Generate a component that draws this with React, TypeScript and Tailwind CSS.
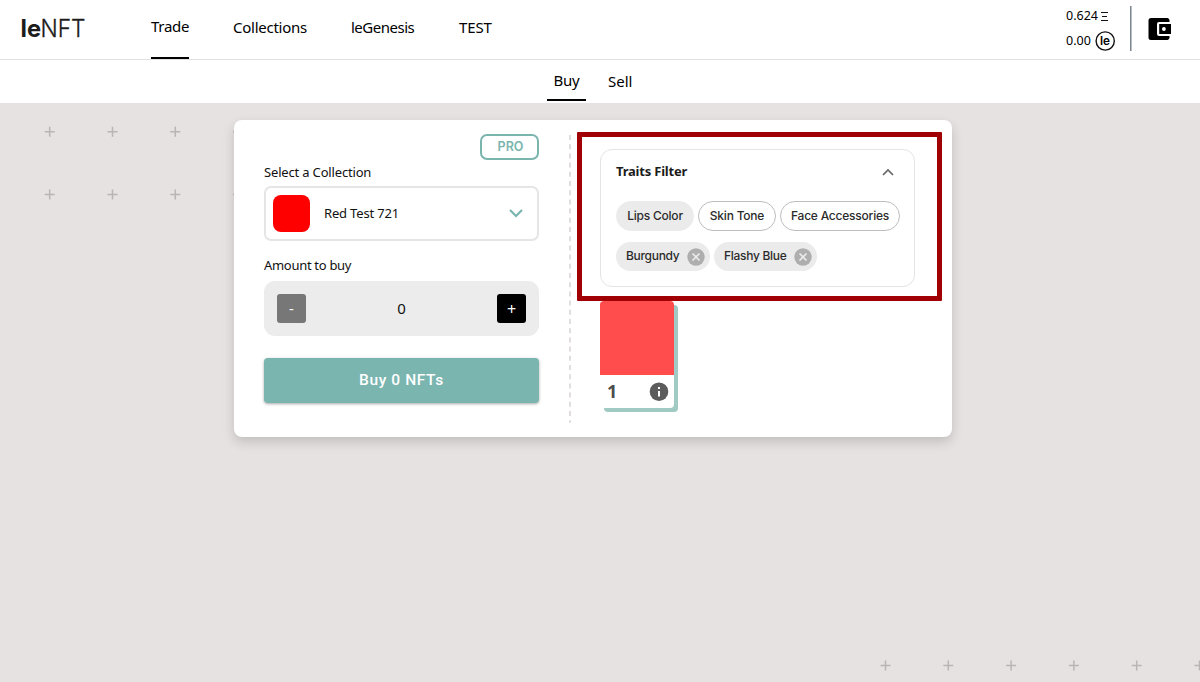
import React, { useState } from 'react';
import clsx from 'clsx';

const navItems = [
    { label: 'Trade', className: 'w-[38px] mr-[44px] tracking-[-0.3px]' },
    { label: 'Collections', className: 'w-[75px] mr-[43px] tracking-[-0.25px]' },
    { label: 'leGenesis', className: 'w-[64px] mr-[44px] tracking-[-0.5px]' },
    { label: 'TEST', className: 'w-[34px] tracking-[-0.1px]' },
];

const traits = [
    { label: 'Lips Color', className: 'w-[78px]' },
    { label: 'Skin Tone', className: 'w-[78px]' },
    { label: 'Face Accessories', className: 'w-[120px]' },
];

const values = [
    { label: 'Burgundy', className: 'w-[94px]' },
    { label: 'Flashy Blue', className: 'w-[103px]' },
];

const Crosses: React.FC<{ cols: number[]; rows: number[]; className: string }> = ({ cols, rows, className }) => (
    <svg className={className} fill="none" stroke="#b9b5b4" strokeWidth="1.5">
        {rows.map((y) =>
            cols.map((x) => <path key={`${x}-${y}`} d={`M${x - 5} ${y}h10M${x} ${y - 5}v10`} />)
        )}
    </svg>
);

const Header: React.FC = () => (
    <header className="flex h-[60px] border-b border-[#dfe0e4] bg-white">
        <div className="w-[151px] pt-[11px] pl-[20px]">
            <svg width="68" height="34" viewBox="0 0 68 34" fill="#1c1c1c" fontFamily="Inter, sans-serif">
                <text x="0.5" y="26" fontSize="24" fontWeight="700" textLength="20.5" lengthAdjust="spacingAndGlyphs">le</text>
                <text x="20.500" y="26" fontSize="24" fontWeight="300" stroke="#1c1c1c" strokeWidth="0.3" textLength="45" lengthAdjust="spacingAndGlyphs">NFT</text>
            </svg>
        </div>
        <nav className="flex text-[15px] leading-5 text-black">
            {navItems.map((item, i) => (
                <a
                    key={item.label}
                    className={clsx(
                        'h-[59px] whitespace-nowrap',
                        item.className,
                        i === 0 ? 'border-b-2 border-black pt-[16px]' : 'pt-[17px]'
                    )}
                >
                    {item.label}
                </a>
            ))}
        </nav>
        <div className="ml-auto flex">
            <div className="w-[64px] pt-[7px] text-[12.5px] leading-[18px] text-black">
                <div className="flex items-center">
                    <span className="w-[34px]">0.624</span>
                    <svg width="9" height="10" viewBox="0 0 9 10" fill="none" stroke="#111">
                        <path d="M1 1.500h7M2 5.500h5M1 9.500h7" />
                    </svg>
                </div>
                <div className="mt-[6px] flex h-5 items-center">
                    <span className="w-[28px]">0.00</span>
                    <svg width="21" height="21" viewBox="0 0 21 21" className="ml-px shrink-0">
                        <circle cx="10.2" cy="10" r="9.1" fill="none" stroke="#111" strokeWidth="1.4" />
                        <text x="5" y="14" fontSize="11.5" fontWeight="600" fontFamily="Inter, sans-serif" textLength="10" lengthAdjust="spacingAndGlyphs">le</text>
                    </svg>
                </div>
            </div>
            <div className="mt-[6px] h-[45px] w-[2px] border-l border-[#7d8591] bg-[#b9bdc4]" />
            <div className="w-[68px] pt-[17px] pl-[16px]">
                <svg width="24" height="24" viewBox="0 0 24 24">
                    <path d="M3 1h16.500a2.500 2.500 0 0 1 2 2v18a2.500 2.500 0 0 1-2 2H3a2.500 2.500 0 0 1-2.500-2.500v-17A2.500 2.500 0 0 1 3 1z" fill="#000" />
                    <path d="M24 5H11a2 2 0 0 0-2 2v10a2 2 0 0 0 2 2h13z" fill="#fff" />
                    <path d="M11.200 7H23v10H11.200z" fill="#000" />
                    <circle cx="15.900" cy="12" r="1.900" fill="#fff" />
                </svg>
            </div>
        </div>
    </header>
);

const BuyPanel: React.FC = () => {
    const [amount, setAmount] = useState(0);

    return (
        <section className="flex w-[275px] flex-col">
            <button className="mt-[14px] h-[26px] w-[59px] self-end rounded-[7px] border-2 border-[#7ab5ae] pt-px pl-[2px] font-['Inter'] text-[12.5px] leading-none font-semibold text-[#7ab5ae]">
                PRO
            </button>
            <label className="mt-[3px] text-[13px] leading-[18px] tracking-[-0.17px]">Select a Collection</label>
            <div className="mt-[5px] flex h-[55px] items-center rounded-[7px] border-2 border-[#e5e5e5] pr-[14px] pl-[7px]">
                <div className="size-[37px] rounded-[8px] bg-[#ff0000]" />
                <span className="ml-[14px] text-[13px] tracking-[-0.17px]">Red Test 721</span>
                <svg className="ml-auto" width="14" height="9" viewBox="0 0 14 9" fill="none" stroke="#7ab5ae" strokeWidth="2.200">
                    <path d="M1 1l6 6 6-6" />
                </svg>
            </div>
            <label className="mt-[15px] text-[13px] leading-[18px] tracking-[-0.3px]">Amount to buy</label>
            <div className="mt-[7px] flex h-[55px] items-center justify-between rounded-[11px] bg-[#ececec] px-[13px]">
                <button className="size-[29px] rounded-[3px] bg-[#777] text-[15px] text-white" onClick={() => setAmount(Math.max(0, amount - 1))}>
                    -
                </button>
                <span className="pb-px text-[15px]">{amount}</span>
                <button className="size-[29px] rounded-[3px] bg-black text-[16px] text-white" onClick={() => setAmount(amount + 1)}>
                    +
                </button>
            </div>
            <button className="mt-[22px] h-[45px] rounded-[4px] bg-[#7ab5b0] font-['Roboto'] text-[15.5px] font-medium tracking-[0.6px] text-white shadow-[0_1px_3px_rgba(0,0,0,0.35)]">
                Buy {amount} NFTs
            </button>
        </section>
    );
};

const TraitsFilter: React.FC = () => {
    const [active, setActive] = useState('Lips Color');

    return (
        <div className="h-[138px] w-[315px] rounded-[12px] border border-[#e4e4e4] px-[15px] pt-[13px]">
            <div className="flex h-[18px] items-center justify-between pr-[5px]">
                <h3 className="text-[13px] font-bold tracking-[-0.2px] text-[#1c1c1c]">Traits Filter</h3>
                <svg width="12" height="8" viewBox="0 0 12 8" fill="none" stroke="#666" strokeWidth="1.7">
                    <path d="M1 7l5-5 5 5" />
                </svg>
            </div>
            <div className="mt-[20px] flex gap-[4px] font-['Inter'] text-[12px] text-[#2b2b2b]">
                {traits.map((trait) => (
                    <button
                        key={trait.label}
                        onClick={() => setActive(trait.label)}
                        className={clsx(
                            'h-[30px] shrink-0 rounded-full border pb-px font-medium tracking-[-0.22px] whitespace-nowrap',
                            trait.className,
                            active === trait.label ? 'border-[#ebebeb] bg-[#ebebeb]' : 'border-[#bdbdbd]'
                        )}
                    >
                        {trait.label}
                    </button>
                ))}
            </div>
            <div className="mt-[11px] flex gap-[4px] font-['Inter'] text-[12px] text-[#2b2b2b]">
                {values.map((value) => (
                    <div
                        key={value.label}
                        className={clsx('flex h-[29px] items-center justify-between rounded-full bg-[#ebebeb] pr-[5px] pl-[10px]', value.className)}
                    >
                        <span className="pb-px font-medium tracking-[-0.3px] whitespace-nowrap">{value.label}</span>
                        <svg width="18" height="18" viewBox="0 0 18 18" className="shrink-0">
                            <circle cx="9" cy="9" r="8.7" fill="#aeaeae" />
                            <path d="M5.500 5.500l7 7M12.500 5.500l-7 7" stroke="#ebebeb" strokeWidth="1.700" />
                        </svg>
                    </div>
                ))}
            </div>
        </div>
    );
};

const NftCard: React.FC = () => (
    <div className="mt-[14px] h-[107px] w-[74px] rounded-[4px] bg-white shadow-[4px_4px_0_#a1cac5]">
        <div className="h-[74px] rounded-t-[4px] bg-[#ff4d4d]" />
        <div className="flex h-[33px] items-center justify-between pr-[5px] pl-[7px]">
            <span className="text-[18px] font-bold text-[#4d4d4d]">1</span>
            <svg width="20" height="20" viewBox="0 0 20 20" fill="#fff">
                <circle cx="10" cy="9.700" r="9.300" fill="#5c5c5c" />
                <path d="M9 5h2v2H9zM9 9h2v5.500H9z" />
            </svg>
        </div>
    </div>
);

export default function App() {
    return (
        <div className="flex h-[682px] w-[1200px] flex-col overflow-hidden bg-white font-['Noto_Sans',sans-serif] text-[#111]">
            <Header />
            <div className="flex h-[43px] shrink-0 pl-[547px] text-[15px] leading-5 text-black">
                <a className="h-[41px] w-[39px] border-b-2 border-black pt-[10px] text-center tracking-[-0.3px]">Buy</a>
                <a className="ml-[22px] pt-[11px]">Sell</a>
            </div>

            <main className="relative h-[579px] bg-[#e6e2e1] pt-[17px] pl-[234px]">
                {/* background crosses */}
                <Crosses className="absolute top-0 left-0 h-[120px] w-[260px]" cols={[49.7, 112.5, 175.3, 238.1]} rows={[28.7, 91.6]} />
                <Crosses className="absolute right-0 bottom-0 h-[40px] w-[340px]" cols={[25.5, 88.3, 151.1, 213.9, 276.7, 339.5]} rows={[23.5]} />

                <div className="relative flex h-[317px] w-[718px] rounded-[8px] bg-white pl-[30px] shadow-[0_5px_12px_rgba(0,0,0,0.16)]">
                    <BuyPanel />
                    <svg className="mt-[15px] ml-[30px] shrink-0" width="2" height="288" stroke="#e2dede" strokeWidth="2" strokeDasharray="5 4.200">
                        <path d="M1 0v288" />
                    </svg>
                    <section className="ml-[29px] pt-[29px]">
                        <TraitsFilter />
                        <NftCard />
                    </section>
                    {/* highlight frame */}
                    <div className="pointer-events-none absolute top-[12px] left-[343px] h-[169px] w-[365px] rounded-[1px] border-[5px] border-[#a00004]" />
                </div>
            </main>
        </div>
    );
}
